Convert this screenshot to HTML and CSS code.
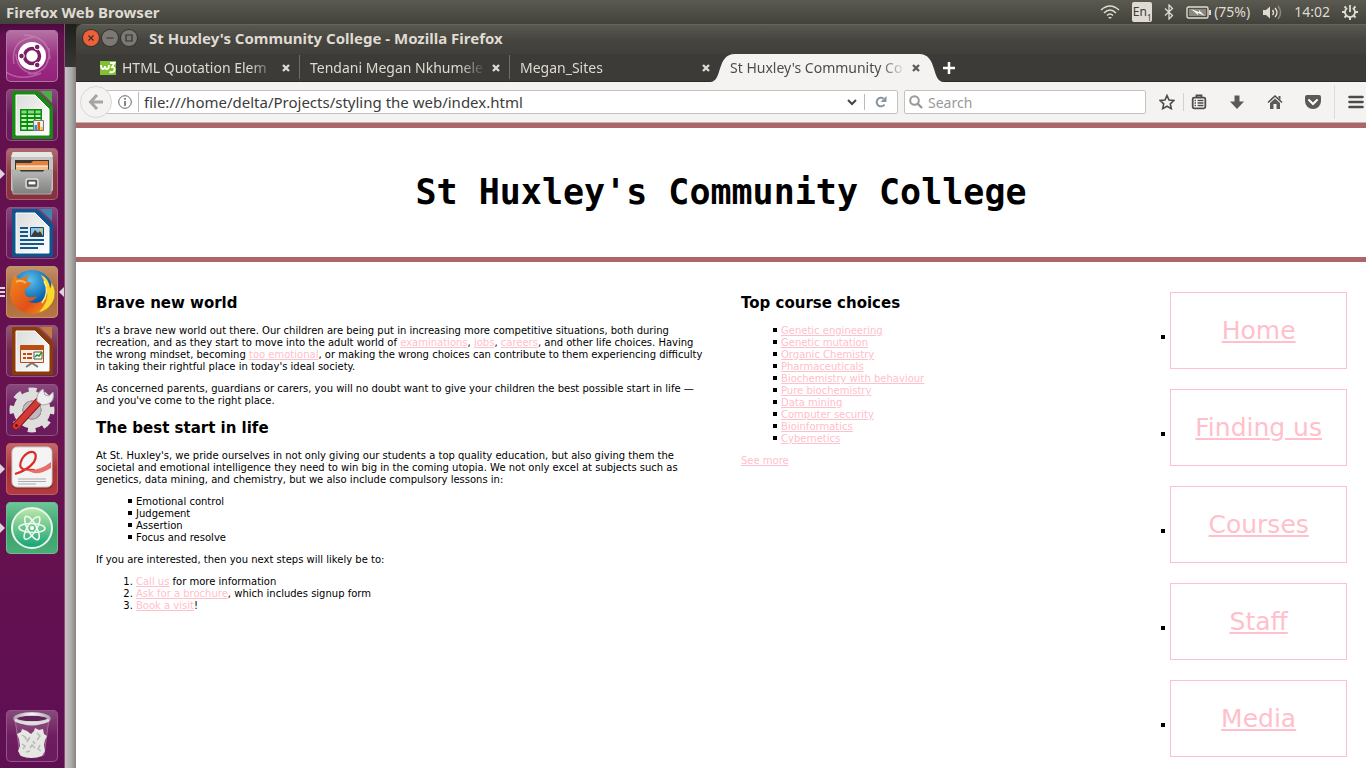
FILE: index.html
```html
<!DOCTYPE html>
<html lang="en">
<head>
<meta charset="utf-8">
<title>St Huxley's Community College</title>
<link rel="stylesheet" href="styles.css">
</head>
<body>
<svg class="defs" aria-hidden="true">
  <defs>
    <linearGradient id="paper" x1="0" y1="0" x2="1" y2="1"><stop offset="0" stop-color="#dcdcdc"/><stop offset="1" stop-color="#fff"/></linearGradient>
    <linearGradient id="metal" x1="0" y1="0" x2="0" y2="1"><stop offset="0" stop-color="#b9b9b7"/><stop offset="1" stop-color="#7f7f7d"/></linearGradient>
    <linearGradient id="fox" x1="0" y1="0" x2="1" y2="1"><stop offset="0" stop-color="#f08a1c"/><stop offset=".6" stop-color="#e2501a"/><stop offset="1" stop-color="#f5a71e"/></linearGradient>
    <radialGradient id="globe" cx=".45" cy=".25" r=".8"><stop offset="0" stop-color="#5cc3ee"/><stop offset=".6" stop-color="#0c66b0"/><stop offset="1" stop-color="#0a3474"/></radialGradient>
    <linearGradient id="atom" x1="0" y1="0" x2="0" y2="1"><stop offset="0" stop-color="#bfe8a8"/><stop offset="1" stop-color="#12a377"/></linearGradient>
    <linearGradient id="ring" x1="0" y1="0" x2="1" y2="0"><stop offset="0" stop-color="#aaa"/><stop offset=".5" stop-color="#f6f6f6"/><stop offset="1" stop-color="#aaa"/></linearGradient>
  </defs>
</svg>

<header class="panel">
  <span class="panel-title">Firefox Web Browser</span>
  <div class="indicators">
    <svg class="wifi" width="20" height="14" viewBox="0 0 20 14" fill="none" stroke="#dfdbd2" stroke-width="1.6"><path d="M1 5Q10-3 19 5M4 8Q10 2 16 8M7 10.5Q10 7.500 13 10.500"/><path d="M8 12h4l-2 2z" fill="#dfdbd2" stroke="none"/></svg>
    <span class="keyboard">En<sub>1</sub></span>
    <svg class="bluetooth" width="10" height="16" viewBox="0 0 10 16" fill="none" stroke="#dfdbd2" stroke-width="1.3"><path d="M1 4.500l7.500 7L5 15V1l3.500 3.500L1 11.500"/></svg>
    <span class="battery"><svg width="25" height="13" viewBox="0 0 25 13"><rect x="1" y="1" width="21" height="11" rx="1.500" fill="none" stroke="#dfdbd2" stroke-width="1.400"/><path d="M3 3h17v7H3z" fill="#8b887f"/><path d="M23 4h2v5h-2z" fill="#dfdbd2"/><path d="M5 3l8 3v-2l6 6-7-3v2z" fill="#f5f3ee"/></svg>(75%)</span>
    <svg class="sound" width="20" height="15" viewBox="0 0 20 15" fill="none" stroke="#dfdbd2" stroke-width="1.500"><path d="M1 5h3l4-3.500v12L4 10H1z" fill="#dfdbd2" stroke="none"/><path d="M10.500 5q2 2.500 0 5M13 3q4 4.500 0 9"/><path d="M16 1q5 6.500 0 13" stroke="#8c8981"/></svg>
    <time>14:02</time>
    <svg class="gear" width="16" height="16" viewBox="0 0 16 16" fill="none" stroke="#dfdbd2"><path d="M5.200 4a5 5 0 1 0 5.600 0" stroke-width="1.800"/><path d="M8 1v7" stroke-width="1.800"/><path d="M3.500 8H0M16 8h-3.500M4 4L2.500 2.500M12 4l1.500-1.500M4.500 11.500l-2 2M11.500 11.500l2 2M8 12.500V16" stroke-width="2"/></svg>
  </div>
</header>

<div class="desktop">
  <nav class="launcher" aria-label="Launcher">
    <button class="tile dash" aria-label="Dash"><svg viewBox="0 0 52 52"><g fill="none" stroke="#cf8fc0" stroke-opacity=".55" stroke-width="1.500"><path d="M8 34Q4 10 28 7M18 5Q43 6 44 29M43 18Q45 43 22 44M34 44Q11 44 10 24M0 42Q15 52 35 43"/></g><circle cx="26" cy="26" r="14" fill="#fff"/><circle cx="26" cy="26" r="7.500" fill="none" stroke="#7a1f66" stroke-width="3.500"/><g fill="#7a1f66" stroke="#fff" stroke-width="1"><circle cx="15.500" cy="26" r="2.800"/><circle cx="31.200" cy="17" r="2.800"/><circle cx="31.200" cy="35" r="2.800"/></g></svg></button>
    <button class="tile" aria-label="Spreadsheet"><svg viewBox="0 0 52 52"><path d="M7 3h24l15 15v31H7z" fill="#188a12" stroke="#188a12" stroke-width="2" stroke-linejoin="round"/><path d="M10 6h19l14 14v26H10z" fill="url(#paper)" stroke="#fff"/><path d="M34 2h12v12z" fill="#4faa48"/><path d="M14 20h22v22H14z" fill="#0a8c0b"/><g fill="#c9f5c2"><path d="M15.500 21.500h5v3h-5zm6.500 0h6v3h-6zm7.500 0h5v3h-5z" fill="#82dc7c"/><path d="M15.500 26h5v2h-5zm6.500 0h6v2h-6zm7.500 0h5v2h-5zM15.500 30h5v2h-5zm6.500 0h6v2h-6zm7.500 0h5v2h-5zM15.500 34h5v2h-5zm6.500 0h6v2h-6zM15.500 38h5v2.500h-5zm6.500 0h6v2.500h-6z"/></g><path d="M27.500 31.500h10v10h-10z" fill="#eee" stroke="#777"/><path d="M28.500 36h2.500v5h-2.500z" fill="#1c99e0"/><path d="M31.500 33H34v8h-2.500z" fill="#e8590c"/><path d="M34.500 38H37v3h-2.500z" fill="#f8c51c"/></svg></button>
    <button class="tile files" aria-label="Files"><svg viewBox="0 0 52 52"><path d="M6 6q0-2 2-2h36q2 0 2 2l1 6v29q0 3-3 3H8q-3 0-3-3V12z" fill="#c4c4c1"/><path d="M6 6q0-2 2-2h36q2 0 2 2l1 3H5z" fill="#e6e6e3"/><path d="M9 12h34v12H9z" fill="#3a3633"/><path d="M10 15h15l2-2h15v9H10z" fill="#e8823a"/><path d="M10 18h32v4H10z" fill="#f5bd83"/><path d="M10 18h32" stroke="#fff"/><path d="M6 22h7l2 2h22l2-2h7l-1 24H7z" fill="url(#metal)" stroke="#aaa"/><rect x="20" y="31" width="12" height="9" rx="2" fill="#777" stroke="#ddd" stroke-width="1.500"/><path d="M22 33h8v4h-8z" fill="#fff" stroke="#333"/></svg><i class="running"></i></button>
    <button class="tile" aria-label="Writer"><svg viewBox="0 0 52 52"><path d="M7 3h24l15 15v31H7z" fill="#0c568d" stroke="#0c568d" stroke-width="2" stroke-linejoin="round"/><path d="M10 6h19l14 14v26H10z" fill="url(#paper)" stroke="#fff"/><path d="M34 2h12v12z" fill="#3d86ad"/><path d="M14 21h8M14 25h8M14 29h8M14 33h24M14 37h24M14 41h18" stroke="#0e5a8e" stroke-width="2"/><path d="M24.500 20.500h13v9h-13z" fill="#83c7ec" stroke="#0e4d77"/><path d="M25 29l4-6 3 3 2-2 3 5z" fill="#433b33"/><circle cx="35" cy="23" r="1.500" fill="#f8c51c"/></svg></button>
    <button class="tile firefox" aria-label="Firefox"><svg viewBox="0 0 52 52"><circle cx="26" cy="25" r="21" fill="url(#globe)"/><path d="M5 21q0-6 4-12 2 4 5 4 5-2 9-4-3 4-2 7 4 0 4 2-2 3-6 5-1 6 3 8 5 1 9-1-3 6-10 5 10 5 17-2 6-7 3-17 5 5 7 12-2 19-22 20Q7 46 4 29q0-4 1-8z" fill="url(#fox)"/><path d="M35 9q8 3 9 14 2-3 1-7 7 10 1 21-6 8-13 9 10-10 8-22-1-6-6-15z" fill="#fbd82c"/><path d="M38 15q6 11-2 22" fill="none" stroke="#fff28a" stroke-width="1.500"/><path d="M10 16q5-3 10 1" stroke="#ffb457" fill="none" stroke-width="2"/></svg><i class="windows"></i><i class="focused"></i></button>
    <button class="tile impress" aria-label="Impress"><svg viewBox="0 0 52 52"><path d="M7 3h24l15 15v31H7z" fill="#8c3a08" stroke="#8c3a08" stroke-width="2" stroke-linejoin="round"/><path d="M10 6h19l14 14v26H10z" fill="url(#paper)" stroke="#fff"/><path d="M34 2h12v12z" fill="#c37a43"/><path d="M20 42l6-4 6 4" fill="none" stroke="#777" stroke-width="2"/><path d="M14.500 20.500h23v17h-23z" fill="#f7eee8" stroke="#b94e14"/><path d="M15 21h22v4H15zM17 28h3v2h-3zM17 32h3v2h-3zM21 28h5v2h-5zM21 32h5v2h-5z" fill="#b94e14"/><path d="M28 27h8v7h-8z" fill="#fff" stroke="#555"/><path d="M29 32l2-2 2 1 3-4" fill="none" stroke="#1a9b1a" stroke-width="1.500"/></svg></button>
    <button class="tile" aria-label="System Settings"><svg viewBox="0 0 52 52"><circle cx="26" cy="26" r="14" fill="none" stroke="#dededc" stroke-width="9"/><circle cx="26" cy="26" r="20" fill="none" stroke="#dededc" stroke-width="5" stroke-dasharray="8 7.710" stroke-dashoffset="4"/><circle cx="26" cy="26" r="9" fill="#c2b8bf" stroke="#a5a5a3"/><path d="M10 42L33 17" stroke="#8c1717" stroke-width="8" stroke-linecap="round"/><path d="M10 42L32 18" stroke="#d33a35" stroke-width="6" stroke-linecap="round"/><path d="M31 17q-1-8 6-12l2 6 4 1 4-4q2 9-5 12-4 1-6 1l-5-4z" fill="#eee" stroke="#aaa"/><circle cx="10.500" cy="41.500" r="1.500" fill="#6b0f0f"/></svg></button>
    <button class="tile document" aria-label="Document Viewer"><svg viewBox="0 0 52 52"><rect x="6" y="5" width="41" height="41" rx="5" fill="#8e3030"/><rect x="6" y="4" width="40" height="40" rx="5" fill="#f4f4f4" stroke="#ccc"/><path d="M9 31Q22 27 28 19q4-8-1-10-6-1-11 7-4 8 1 10 5 1 12 1" fill="none" stroke="#d92b2b" stroke-width="2.200"/><path d="M17 26q14 4 28-7v6q-13 8-20 4z" fill="#e8706c"/><path d="M12 36h28M12 38.500h28M12 41h18" stroke="#aaa"/></svg><i class="running"></i></button>
    <button class="tile atom" aria-label="Atom"><svg viewBox="0 0 52 52"><circle cx="26" cy="26" r="20" fill="url(#atom)" stroke="#e8f7ea" stroke-width="2"/><g fill="none" stroke="#f2fbf3" stroke-width="1.500"><ellipse cx="26" cy="26" rx="4.500" ry="13" transform="rotate(-28 26 26)"/><ellipse cx="26" cy="26" rx="4.500" ry="13" transform="rotate(32 26 26)"/><ellipse cx="26" cy="26" rx="4.500" ry="13" transform="rotate(92 26 26)"/></g><circle cx="26" cy="26" r="2" fill="#fff"/></svg><i class="running"></i></button>
    <button class="tile trash" aria-label="Trash"><svg viewBox="0 0 52 52"><path d="M9 9l5 36q12 5 24 0l5-36z" fill="#fff" fill-opacity=".1" stroke="#b995b4" stroke-opacity=".6"/><path d="M11 24l4-2 1-3 5 2 4 3 3-3 1-3 4 2 4-1 1 5 3 2-2 4-1 5 1 6-3 5q-11 4-21 0l-3-5 2-5-1-7z" fill="#e6e6e3"/><path d="M16 25l3 2 2 3M24 27l-3 5M31 23l3 3-3 4M27 31l2 3M16 34l3 2-2 3M24 38l2-3 3 3M34 35l-2 4 3 2M20 42l4-1" fill="none" stroke="#b9b9b5" stroke-width="1.500"/><ellipse cx="26" cy="8.500" rx="17" ry="4.500" fill="#642058" stroke="url(#ring)" stroke-width="3.500"/><path d="M9 10q17 8 34 0" fill="none" stroke="#ddd" stroke-width="3"/></svg></button>
  </nav>

  <div class="backdrop"><div class="backdrop-title"></div><div class="backdrop-track"></div></div>

  <div class="window">
    <div class="titlebar">
      <button class="control close" aria-label="Close window"><svg viewBox="0 0 16 16"><path d="M5.500 5.500l5 5m0-5l-5 5"/></svg></button>
      <button class="control" aria-label="Minimise"><svg viewBox="0 0 16 16"><path d="M4.500 8h7"/></svg></button>
      <button class="control" aria-label="Maximise"><svg viewBox="0 0 16 16"><path d="M5 5h6v6H5z"/></svg></button>
      <span class="window-title">St Huxley's Community College - Mozilla Firefox</span>
    </div>
    <div class="tabs">
      <div class="tab"><svg class="favicon" width="16" height="14" viewBox="0 0 16 14"><path d="M0 0h16v14H0z" fill="#7fc12f"/><path d="M1 4q0 4 2 4t2-3q0 3 2 3t2-4M10 2h4.500l-2.500 4q3 0 2.500 3T9.500 11" fill="none" stroke="#fff" stroke-width="1.800"/></svg><span class="label">HTML Quotation Elem</span><button class="tab-close" aria-label="Close tab"><svg viewBox="0 0 10 10"><path d="M2 2l6 6M8 2L2 8"/></svg></button></div>
      <div class="tab"><span class="label">Tendani Megan Nkhumele</span><button class="tab-close" aria-label="Close tab"><svg viewBox="0 0 10 10"><path d="M2 2l6 6M8 2L2 8"/></svg></button></div>
      <div class="tab"><span class="label">Megan_Sites</span><button class="tab-close" aria-label="Close tab"><svg viewBox="0 0 10 10"><path d="M2 2l6 6M8 2L2 8"/></svg></button></div>
      <div class="tab active"><svg class="tab-shape" viewBox="0 0 234 28" preserveAspectRatio="none"><path d="M0 28C13 28 6 0 25 0H209C228 0 221 28 234 28z" fill="#f4f3f2"/></svg><span class="label">St Huxley's Community Co</span><button class="tab-close" aria-label="Close tab"><svg viewBox="0 0 10 10"><path d="M2 2l6 6M8 2L2 8"/></svg></button></div>
      <button class="new-tab" aria-label="New tab"><svg width="14" height="14" viewBox="0 0 14 14"><path d="M7 1v12M1 7h12" stroke="#fff" stroke-width="2.500"/></svg></button>
    </div>
    <div class="toolbar">
      <button class="back" aria-label="Back"><svg width="16" height="16" viewBox="0 0 16 16" fill="none" stroke="#a5a5a4" stroke-width="3"><path d="M9 1L2.500 8 9 15M3 8h12"/></svg></button>
      <div class="address">
        <svg width="14" height="14" viewBox="0 0 14 14" fill="none" stroke="#666"><circle cx="7" cy="7" r="6.300"/><path d="M7 6v5M7 3v1.800" stroke-width="1.600"/></svg>
        <input class="url" type="text" aria-label="Address" value="file:///home/delta/Projects/styling the web/index.html">
        <button class="history" aria-label="Show history"><svg width="10" height="7" viewBox="0 0 10 7" fill="none" stroke="#444" stroke-width="2"><path d="M1 1l4 4 4-4"/></svg></button>
        <button class="reload" aria-label="Reload"><svg width="12" height="12" viewBox="0 0 12 12"><path d="M9.500 8.500A4.300 4.300 0 1 1 8.500 2.600" fill="none" stroke="#8996a0" stroke-width="2"/><path d="M11.500 0v6h-6z" fill="#8996a0"/></svg></button>
      </div>
      <div class="search">
        <svg width="14" height="14" viewBox="0 0 14 14" fill="none" stroke="#999"><circle cx="5.500" cy="5.500" r="4.300" stroke-width="2"/><path d="M8.500 8.500L13 13" stroke-width="2.400"/></svg>
        <input type="search" aria-label="Search" placeholder="Search">
      </div>
      <button class="tool star" aria-label="Bookmark"><svg viewBox="0 0 16 16"><path d="M8 1.500l2 4.500 4.800.500-3.500 3.300 1 4.800L8 12.200l-4.300 2.400 1-4.800L1.200 6.500 6 6z" fill="none" stroke="#4b4b4b" stroke-width="1.600"/></svg></button>
      <button class="tool bookmarks" aria-label="Bookmarks"><svg viewBox="0 0 16 16"><path d="M5.500 3.500v-2h5v2" fill="none" stroke="#4b4b4b" stroke-width="1.800"/><rect x="1.700" y="3.700" width="12.600" height="10.600" rx="1.500" fill="#fff" stroke="#4b4b4b" stroke-width="1.800"/><path d="M3.500 6.500h1.500M3.500 9h1.500M3.500 11.500h1.500M6.500 6.500h6M6.500 9h6M6.500 11.500h6" stroke="#4b4b4b" stroke-width="1.400"/></svg></button>
      <button class="tool" aria-label="Downloads"><svg viewBox="0 0 16 16"><path d="M5.500 1.500h5v6H15L8 15 1 7.500h4.500z" fill="#5a5a5a"/></svg></button>
      <button class="tool" aria-label="Home"><svg viewBox="0 0 16 16"><path d="M1 8.500L8 2l7 6.500" fill="none" stroke="#4b4b4b" stroke-width="1.500"/><path d="M11.500 2h2v4l-2-2zM3 9l5-4.500L13 9v6H9.500v-5h-3v5H3z" fill="#5a5a5a"/></svg></button>
      <button class="tool" aria-label="Pocket"><svg viewBox="0 0 16 16"><path d="M2 1h12q2 0 2 2v4a8 8 0 0 1-16 0V3q0-2 2-2z" fill="#5a5a5a"/><path d="M4 6l4 4 4-4" fill="none" stroke="#fff" stroke-width="2" stroke-linecap="round"/></svg></button>
      <button class="tool menu" aria-label="Menu"><svg viewBox="0 0 16 16"><path d="M1.500 3h13M1.500 8h13M1.500 13h13" stroke="#4b4b4b" stroke-width="2.600" stroke-linecap="round"/></svg></button>
    </div>

    <div class="page">
      <div class="banner"><h1>St Huxley's Community College</h1></div>
      <div class="columns">
        <main>
          <h2>Brave new world</h2>
          <p>It's a brave new world out there. Our children are being put in increasing more competitive situations, both during recreation, and as they start to move into the adult world of <a href="#">examinations</a>, <a href="#">jobs</a>, <a href="#">careers</a>, and other life choices. Having the wrong mindset, becoming <a href="#">too emotional</a>, or making the wrong choices can contribute to them experiencing difficulty in taking their rightful place in today's ideal society.</p>
          <p>As concerned parents, guardians or carers, you will no doubt want to give your children the best possible start in life — and you've come to the right place.</p>
          <h2>The best start in life</h2>
          <p>At St. Huxley's, we pride ourselves in not only giving our students a top quality education, but also giving them the societal and emotional intelligence they need to win big in the coming utopia. We not only excel at subjects such as genetics, data mining, and chemistry, but we also include compulsory lessons in:</p>
          <ul>
            <li>Emotional control</li>
            <li>Judgement</li>
            <li>Assertion</li>
            <li>Focus and resolve</li>
          </ul>
          <p>If you are interested, then you next steps will likely be to:</p>
          <ol>
            <li><a href="#">Call us</a> for more information</li>
            <li><a href="#">Ask for a brochure</a>, which includes signup form</li>
            <li><a href="#">Book a visit</a>!</li>
          </ol>
        </main>
        <aside>
          <h2>Top course choices</h2>
          <ul>
            <li><a href="#">Genetic engineering</a></li>
            <li><a href="#">Genetic mutation</a></li>
            <li><a href="#">Organic Chemistry</a></li>
            <li><a href="#">Pharmaceuticals</a></li>
            <li><a href="#">Biochemistry with behaviour</a></li>
            <li><a href="#">Pure biochemistry</a></li>
            <li><a href="#">Data mining</a></li>
            <li><a href="#">Computer security</a></li>
            <li><a href="#">Bioinformatics</a></li>
            <li><a href="#">Cybernetics</a></li>
          </ul>
          <p><a href="#">See more</a></p>
        </aside>
        <nav class="site-nav" aria-label="Site">
          <ul>
            <li><a href="#">Home</a></li>
            <li><a href="#">Finding us</a></li>
            <li><a href="#">Courses</a></li>
            <li><a href="#">Staff</a></li>
            <li><a href="#">Media</a></li>
          </ul>
        </nav>
      </div>
    </div>
  </div>
</div>
</body>
</html>
```
FILE: styles.css
```css
* { box-sizing: border-box; }

body {
  margin: 0;
  height: 100vh;
  display: flex;
  flex-direction: column;
  overflow: hidden;
  background: #2c2b28;
  font: 15px/20px "Noto Sans", "Open Sans", sans-serif;
  color: #dfdbd2;
}

button {
  border: 0;
  padding: 0;
  background: none;
  font: inherit;
  color: inherit;
  display: flex;
  align-items: center;
  justify-content: center;
  flex: none;
}

svg { flex: none; }
.defs { position: absolute; width: 0; height: 0; }

/* Top panel */
.panel {
  flex: none;
  height: 24px;
  padding: 0 8px 0 6px;
  display: flex;
  align-items: center;
  justify-content: space-between;
  background: linear-gradient(#5b5a51, #42413b);
}
.panel-title, .window-title { font-weight: 700; }
.indicators { display: flex; align-items: center; gap: 12px; }
.keyboard {
  width: 20px;
  height: 20px;
  display: flex;
  justify-content: center;
  border-radius: 2px;
  background: #dfdbd2;
  color: #3c3b37;
  font-size: 12px;
}
.keyboard sub { font-size: 8px; line-height: 8px; align-self: flex-end; }
.battery { display: flex; align-items: center; gap: 3px; font-size: 14px; }
.indicators time { font-size: 14px; }

/* Launcher */
.desktop { flex: 1; min-height: 0; display: flex; }
.launcher {
  flex: none;
  width: 65px;
  padding: 6px;
  display: flex;
  flex-direction: column;
  gap: 7px;
  background: linear-gradient(#4b0a3e, #63104f 12px, #68124f 60%, #5e0f53);
  border-right: 1px solid #8d4b80;
}
.tile {
  position: relative;
  width: 52px;
  height: 52px;
  border-radius: 5px;
  background: linear-gradient(#8a4a7d, #6e1d60 50%, #6a1b5c);
  box-shadow: inset 0 0 0 1px #8f5686;
}
.tile > svg { width: 52px; height: 52px; }
.dash { background: linear-gradient(#b476a5, #9c2f82 50%, #94207c); box-shadow: inset 0 0 0 1px #b273a5; }
.files { background: linear-gradient(#ad6d74, #8b3643 50%, #87303d); box-shadow: inset 0 0 0 1px #a8606b; }
.firefox { background: linear-gradient(#c3926c, #a8683a 50%, #b87745); box-shadow: inset 0 0 0 1px #c4936d; }
.impress { background: linear-gradient(#955b70, #73294f 50%, #6f2450); }
.document { background: linear-gradient(#c96868, #a93237 50%, #b23b40); box-shadow: inset 0 0 0 1px #c15f62; }
.atom { background: linear-gradient(#6fc79a, #37a269 50%, #4dac78); box-shadow: inset 0 0 0 1px #69bd8e; }
.trash { margin-top: auto; }

.running, .focused, .windows { position: absolute; top: 21px; width: 5px; height: 10px; background: #dcd5dd; }
.running { left: -6px; clip-path: polygon(0 0, 100% 50%, 0 100%); }
.focused { right: -6px; clip-path: polygon(100% 0, 0 50%, 100% 100%); }
.windows { left: -6px; background: repeating-linear-gradient(#dcd5dd 0 2px, transparent 2px 4px); }

.backdrop { flex: none; width: 11px; display: flex; flex-direction: column; }
.backdrop-title { height: 43px; background: linear-gradient(#1f1f1c, #383733); }
.backdrop-track { flex: 1; background: linear-gradient(90deg, #c6c5c3, #aaa9a7 60%, #858482); }

/* Browser window */
.window { flex: 1; min-width: 0; display: flex; flex-direction: column; border-radius: 7px 0 0 0; overflow: hidden; }
.titlebar {
  flex: none;
  height: 30px;
  padding: 0 0 3px 7px;
  display: flex;
  align-items: center;
  gap: 3px;
  background: linear-gradient(#5a5950, #46453f 50%, #403f3a);
  border-top: 1px solid #66655c;
}
.control { width: 16px; height: 16px; border-radius: 50%; background: #7b7971; box-shadow: 0 0 0 1px #34332f; }
.control svg { width: 16px; height: 16px; fill: none; stroke: #33322e; stroke-width: 1.2; }
.control.close { background: #ee6037; }
.window-title { margin-left: 9px; }

.tabs { flex: none; height: 28px; padding-left: 14px; display: flex; background: #3c3b37; box-shadow: inset 0 -1px #2b2a27; font-size: 14px; }
.tab {
  position: relative;
  flex: 0 1 210px;
  min-width: 0;
  padding: 0 7px 0 10px;
  display: flex;
  align-items: center;
  border-right: 1px solid transparent;
}
.tab:nth-child(1), .tab:nth-child(2) { border-image: linear-gradient(#3c3b37 2px, #6e6d67 2px 24px, #3c3b37 24px) 1; }
.favicon { margin-right: 6px; }
.label {
  position: relative;
  flex: 1;
  min-width: 0;
  overflow: hidden;
  white-space: nowrap;
  mask-image: linear-gradient(90deg, #000 calc(100% - 26px), transparent);
}
.tab-close { position: relative; width: 12px; height: 12px; margin-left: 4px; }
.tab-close svg { width: 10px; height: 10px; stroke: #dfdbd2; stroke-width: 2.4; }
.active { color: #4c4c4c; }
.active .tab-close svg { stroke: #5c5c5c; }
.tab-shape { position: absolute; left: -10px; top: 0; width: 234px; height: 28px; }
.new-tab { width: 38px; }

.toolbar {
  flex: none;
  height: 41px;
  padding-left: 4px;
  display: flex;
  align-items: center;
  background: #f4f3f2;
  border-bottom: 1px solid #b8b7b5;
}
.back { position: relative; width: 32px; height: 32px; border: 1px solid #d9d8d6; border-radius: 50%; background: #f4f3f2; }
.address, .search {
  height: 24px;
  display: flex;
  align-items: center;
  background: #fff;
  border: 1px solid #c4c2c0;
  border-radius: 2px;
}
.address { flex: 1; min-width: 0; margin-left: -8px; padding-left: 13px; }
.address input, .search input {
  flex: 1;
  min-width: 0;
  height: 22px;
  padding: 0;
  border: 0;
  outline: 0;
  background: none;
  font: inherit;
  color: #3c3c3c;
  appearance: none;
}
.address .url { height: 20px; margin-left: 6px; padding-left: 5px; border-left: 1px solid #bbb; }
.history { width: 25px; height: 16px; }
.reload { width: 33px; height: 16px; border-left: 1px solid #bbb; }
.search { flex: 0 1 242px; margin-left: 6px; padding-left: 4px; }
.search input { margin-left: 5px; font-size: 14px; }
.search input::placeholder { color: #999; opacity: 1; }
.tool { width: 38px; height: 18px; }
.tool svg { width: 16px; height: 16px; }
.star { width: 34px; margin-left: 4px; border-right: 1px solid #d2d1cf; }
.bookmarks { width: 30px; margin-right: 4px; }
.menu { width: 32px; height: 34px; margin-left: 2px; padding-left: 10px; border-left: 1px solid #dddcda; }

/* College page */
.page {
  flex: 1;
  min-height: 0;
  overflow: auto;
  background: #fff;
  color: #000;
  font: 10px/12px "DejaVu Sans", sans-serif;
}
.banner { padding: 40px 20px; border: solid #ad6567; border-width: 5px 0; text-align: center; }
h1 { margin: 0; font: 700 35px/49px "DejaVu Sans Mono", monospace; }
.columns { display: flex; padding-top: 30px; }
main { flex: 0 0 50%; padding: 1px 12px 0 20px; }
aside { flex: 1; padding: 1px 20px 0; }
h2 { margin: 11px 0 12px; font-size: 15px; line-height: 20px; }
h2:first-child { margin-top: 0; }
p, ul, ol { margin: 0 0 10px; }
ul, ol { padding-left: 40px; }
ul { list-style: none; }
ul li::before {
  content: "";
  display: inline-block;
  width: 4px;
  height: 4px;
  margin: 0 4px 0 -8px;
  vertical-align: 2px;
  background: #000;
}
.page a { color: #ffc0cb; }
.site-nav { flex: none; padding-right: 19px; }
.site-nav ul { margin: 0; display: flex; flex-direction: column; gap: 20px; }
.site-nav li { display: flex; align-items: baseline; gap: 5px; }
.site-nav li::before { flex: none; margin: 0 0 2px -9px; }
.site-nav li a {
  flex: 1;
  padding: 23px 24px;
  border: 1px solid #ffc0cb;
  text-align: center;
  font-size: 25px;
  line-height: 29px;
}
```
